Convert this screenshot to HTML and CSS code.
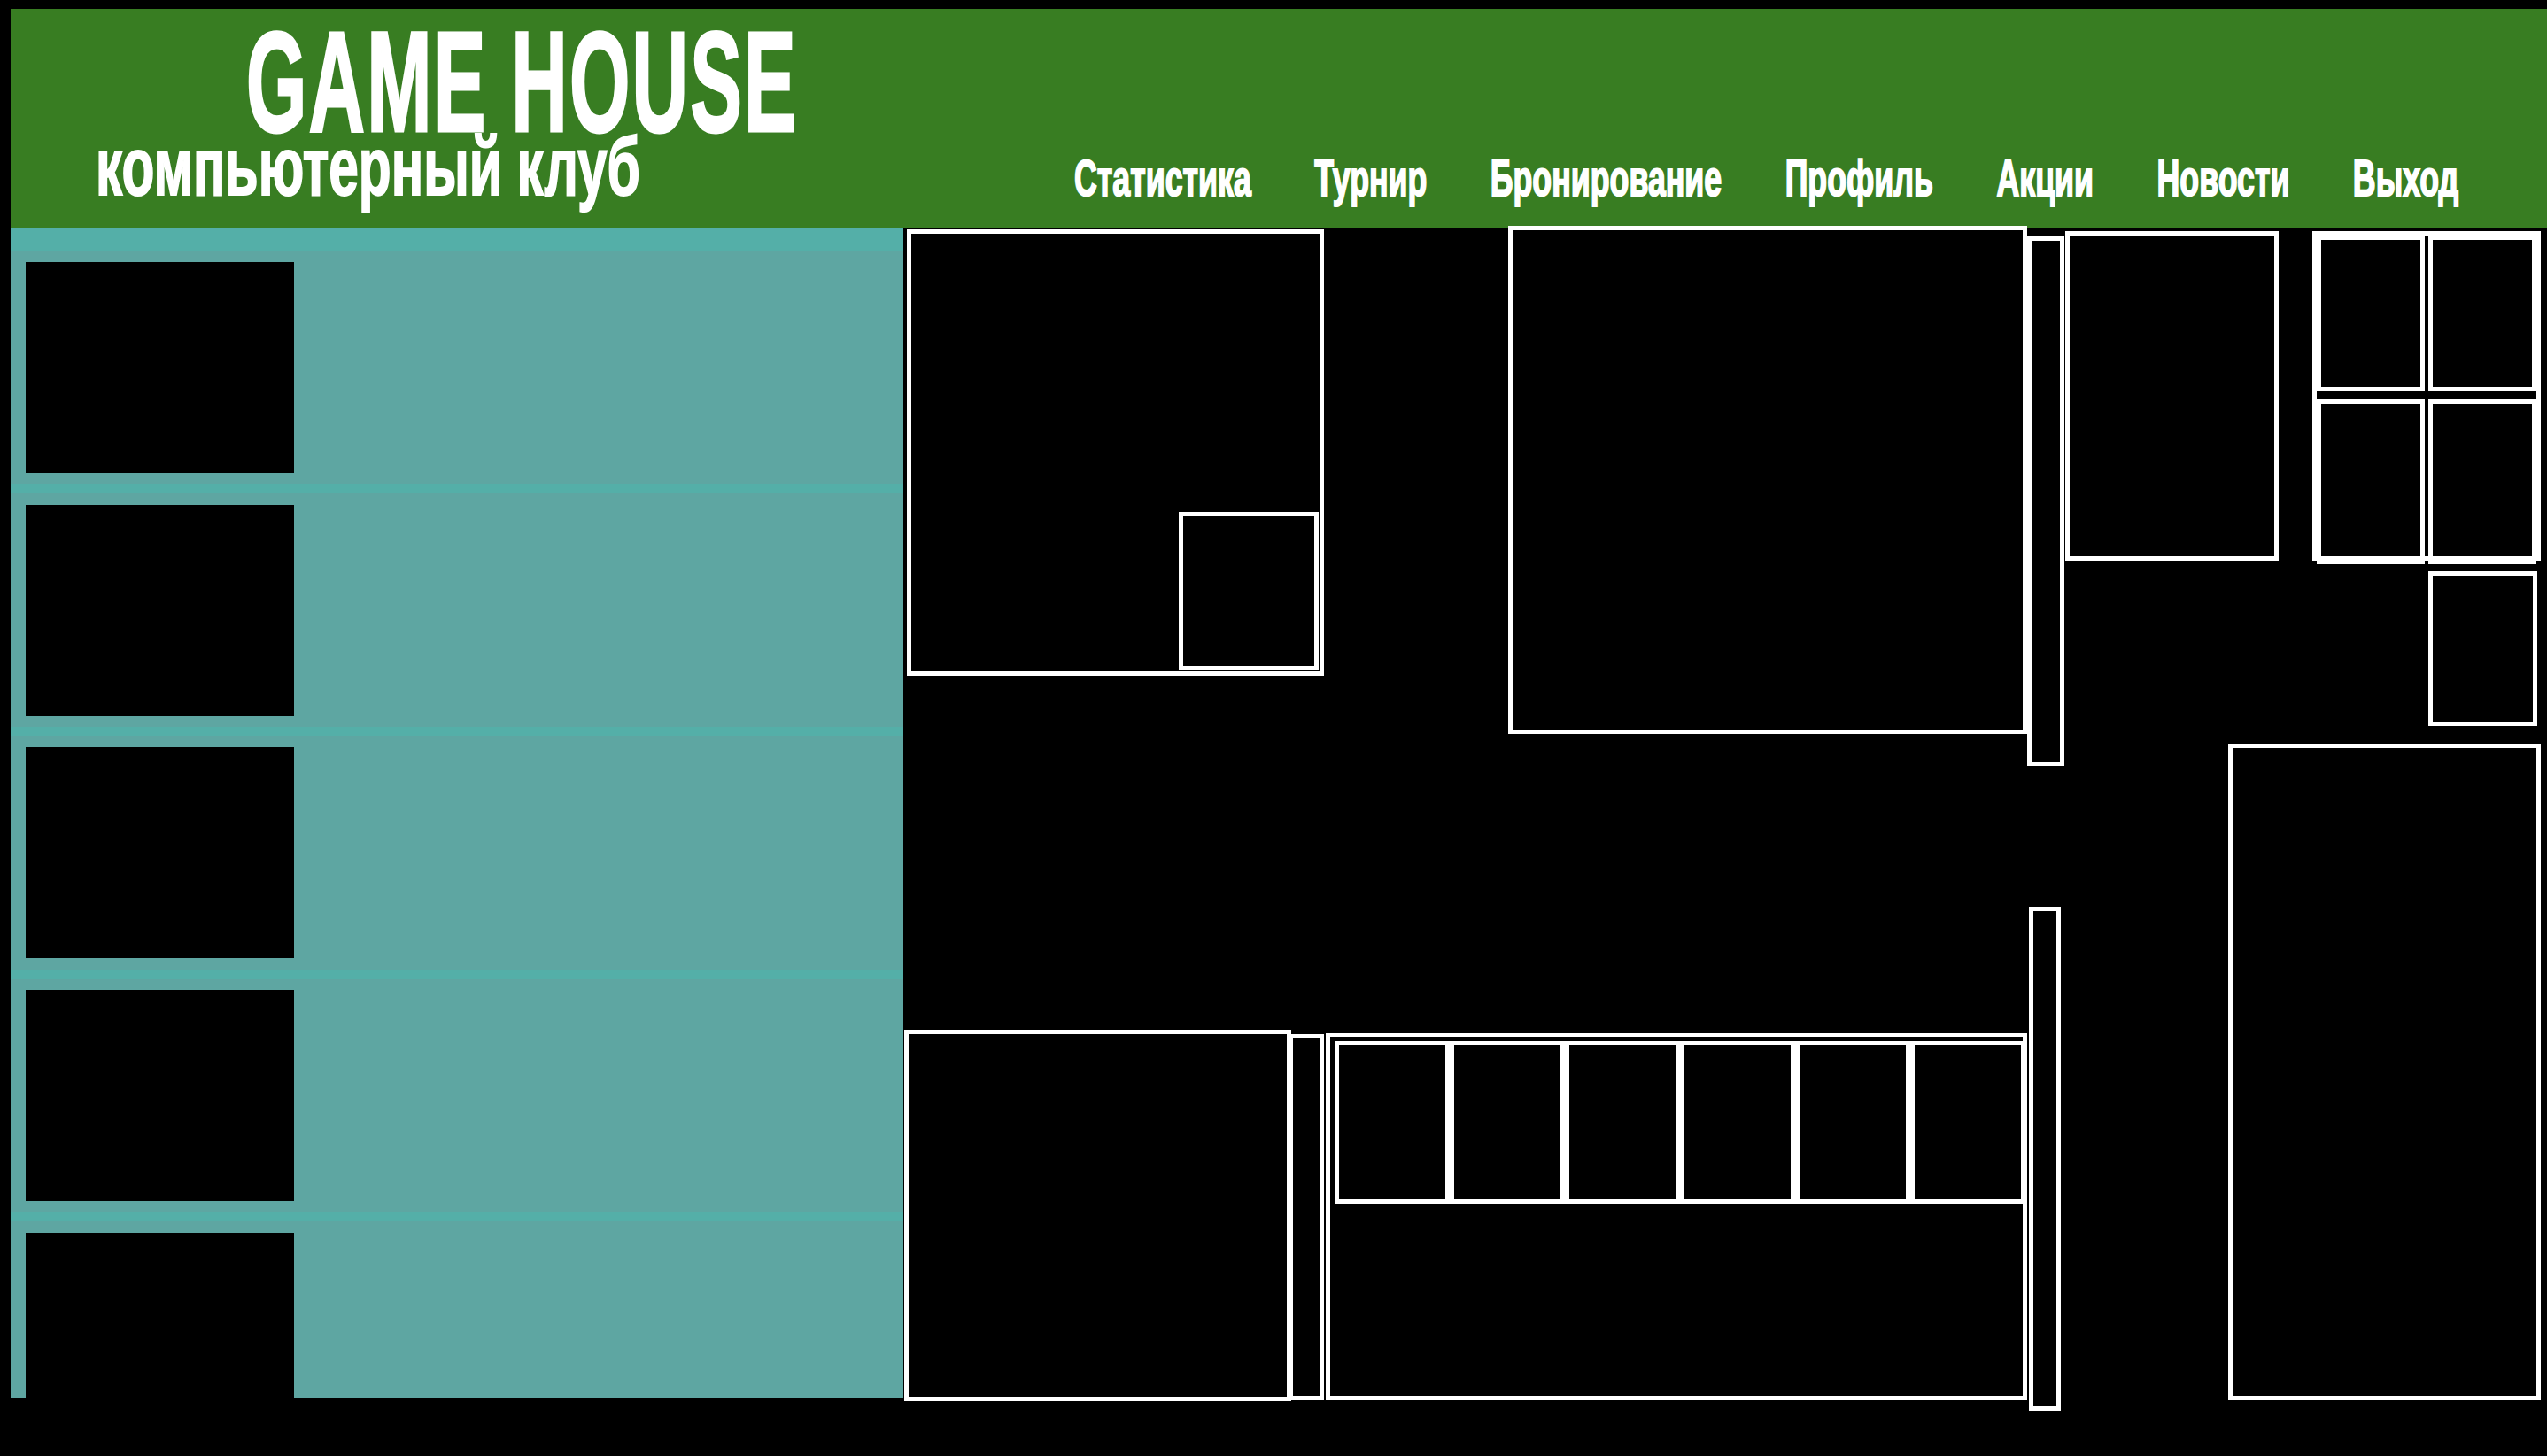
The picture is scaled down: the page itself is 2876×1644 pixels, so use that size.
FILE: index.html
```html
<!DOCTYPE html>
<html lang="ru">
<head>
<meta charset="utf-8">
<title>GAME HOUSE — компьютерный клуб</title>
<link rel="stylesheet" href="styles.css">
</head>
<body>
<header class="header">
  <div class="brand">
    <div class="brand-title">GAME HOUSE</div>
    <div class="brand-sub">компьютерный клуб</div>
  </div>
  <nav class="nav">
    <a class="nav-link">Статистика</a>
    <a class="nav-link">Турнир</a>
    <a class="nav-link">Бронирование</a>
    <a class="nav-link">Профиль</a>
    <a class="nav-link">Акции</a>
    <a class="nav-link">Новости</a>
    <a class="nav-link">Выход</a>
  </nav>
</header>
<main class="main">
  <aside class="list">
    <div class="list-row"><div class="list-thumb"></div></div>
    <div class="list-row"><div class="list-thumb"></div></div>
    <div class="list-row"><div class="list-thumb"></div></div>
    <div class="list-row"><div class="list-thumb"></div></div>
    <div class="list-row"><div class="list-thumb"></div></div>
  </aside>
  <section class="map">
    <div class="box zone zone-a"><div class="box zone-b"></div></div>
    <div class="box zone zone-c"></div>
    <div class="box zone zone-d"></div>
    <div class="box zone zone-e"></div>
    <div class="box zone zone-f">
      <div class="box"></div>
      <div class="box"></div>
      <div class="box"></div>
      <div class="box"></div>
    </div>
    <div class="box zone zone-g"></div>
    <div class="box zone zone-h"></div>
    <div class="box zone zone-i"></div>
    <div class="box zone zone-k"></div>
    <div class="box zone zone-l"></div>
    <div class="box zone zone-j">
      <div class="box seat"></div>
      <div class="box seat"></div>
      <div class="box seat"></div>
      <div class="box seat"></div>
      <div class="box seat"></div>
      <div class="box seat"></div>
    </div>
  </section>
</main>
</body>
</html>
```

FILE: styles.css
```css
html, body {
  margin: 0;
  background: #000;
}

body {
  padding: 10px 0 0 12px;
  height: 1644px;
  box-sizing: border-box;
  overflow: hidden;
  font-family: "Liberation Sans", Arial, sans-serif;
}

/* ---------- header ---------- */
.header {
  display: flex;
  height: 248px;
  background: #387d22;
  color: #fff;
}

.brand {
  flex: 0 0 1201px;
  min-width: 0;
  padding-top: 17px;
  box-sizing: border-box;
}

.brand-title {
  margin-left: 266px;
  font-weight: 700;
  font-size: 162px;
  line-height: 130px;
  letter-spacing: 4px;
  white-space: nowrap;
  transform: scaleX(0.543);
  transform-origin: left center;
  -webkit-text-stroke: 3px #fff;
}

.brand-sub {
  margin-left: 96px;
  font-weight: 700;
  font-size: 92px;
  line-height: 62px;
  white-space: nowrap;
  transform: scaleX(0.656);
  transform-origin: left center;
  -webkit-text-stroke: 2px #fff;
}

.nav {
  flex: none;
  align-self: flex-end;
  margin-bottom: 28px;
  display: flex;
  gap: 114px;
  transform: scaleX(0.627);
  transform-origin: left center;
}

.nav-link {
  font-weight: 700;
  font-size: 57px;
  line-height: 57px;
  color: #fff;
  white-space: nowrap;
  -webkit-text-stroke: 2px #fff;
}

/* ---------- main ---------- */
.main {
  display: flex;
}

.list {
  flex: 0 0 1008px;
  height: 1320px;
  box-sizing: border-box;
  padding-top: 25px;
  overflow: hidden;
  background: #54afa8;
  display: flex;
  flex-direction: column;
  gap: 10px;
}

.list-row {
  flex: none;
  height: 264px;
  box-sizing: border-box;
  padding: 13px 0 0 17px;
  background: #5ea6a2;
}

.list-thumb {
  width: 303px;
  height: 238px;
  background: #000;
}

/* ---------- club map ---------- */
.map {
  flex: 1;
  position: relative;
  height: 1320px;
}

.box {
  box-sizing: border-box;
  border: 5px solid #fff;
}

.zone {
  position: absolute;
}

.zone-a {
  left: 4px; top: 1px; width: 471px; height: 504px;
  display: flex;
  justify-content: flex-end;
  align-items: flex-end;
  padding: 1px;
}

.zone-b {
  flex: none;
  width: 158px;
  height: 179px;
}

.zone-c { left: 683px; top: -3px; width: 586px; height: 574px; }
.zone-d { left: 1269px; top: 9px; width: 42px; height: 598px; }
.zone-e { left: 1312px; top: 3px; width: 241px; height: 372px; }

.zone-f {
  left: 1591px; top: 3px; width: 258px; height: 372px;
  display: grid;
  grid-template-columns: 122px 122px;
  grid-template-rows: 176px 186px;
  column-gap: 4px;
  row-gap: 9px;
  align-content: start;
}

.zone-g { left: 1722px; top: 387px; width: 123px; height: 175px; }
.zone-h { left: 1496px; top: 582px; width: 353px; height: 741px; }
.zone-i { left: 1271px; top: 766px; width: 36px; height: 569px; }
.zone-k { left: 1px; top: 905px; width: 437px; height: 419px; }
.zone-l { left: 435px; top: 909px; width: 40px; height: 414px; }

.zone-j {
  left: 477px; top: 908px; width: 792px; height: 415px;
  display: flex;
  align-items: flex-start;
  padding: 4px 0 0 5px;
}

.seat {
  flex: none;
  width: 130px;
  height: 184px;
}
```
